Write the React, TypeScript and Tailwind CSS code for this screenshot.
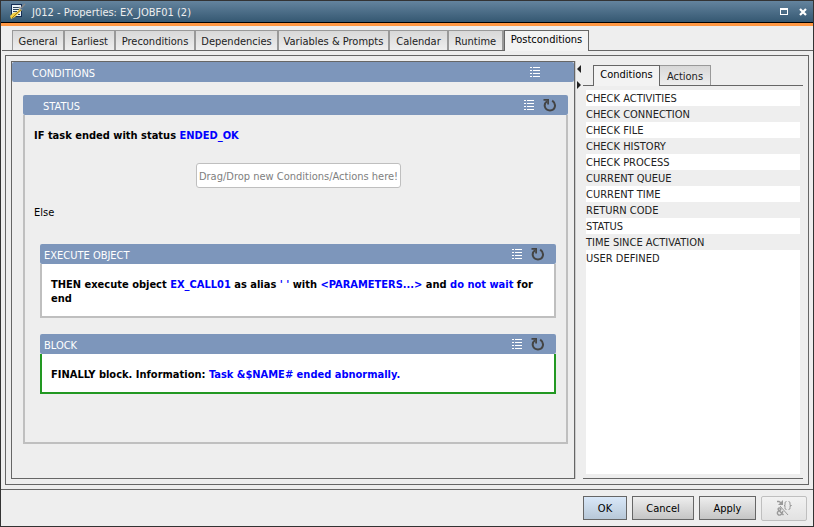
import { useState } from 'react';

const tabs = [
  { name: 'General', width: 'w-[53px]' },
  { name: 'Earliest', width: 'w-[51px]' },
  { name: 'Preconditions', width: 'w-[80px]' },
  { name: 'Dependencies', width: 'w-[83px]' },
  { name: 'Variables & Prompts', width: 'w-[111px]' },
  { name: 'Calendar', width: 'w-[59px]' },
  { name: 'Runtime', width: 'w-[55px]' },
  { name: 'Postconditions', width: 'w-[85px]' },
];

const conditions = [
  'CHECK ACTIVITIES',
  'CHECK CONNECTION',
  'CHECK FILE',
  'CHECK HISTORY',
  'CHECK PROCESS',
  'CURRENT QUEUE',
  'CURRENT TIME',
  'RETURN CODE',
  'STATUS',
  'TIME SINCE ACTIVATION',
  'USER DEFINED',
];

function ListIcon() {
  return (
    <svg width="10" height="10" viewBox="0 0 10 10" fill="#fff" shapeRendering="crispEdges">
      <path d="M0 0h2v1H0zM3 0h7v1H3zM0 3h2v1H0zM3 3h7v1H3zM0 6h2v1H0zM3 6h7v1H3zM0 9h2v1H0zM3 9h7v1H3z" />
    </svg>
  );
}

function ReloadIcon() {
  return (
    <svg width="14" height="14" viewBox="0 0 14 14" fill="none" stroke="#444" strokeWidth="2">
      <path d="M4 3.2C-0.2 6.4 1.8 12.4 7 12.4S14 6 9.2 2.6" />
      <path d="M0.5 1h5.5v5.5H4.2V2.8H0.5z" fill="#444" stroke="none" />
    </svg>
  );
}

function Header({ title, className, reload = true }: { title: string; className: string; reload?: boolean }) {
  return (
    <div className={`flex h-5 items-center rounded-xs bg-[#7d96bb] text-white ${className}`}>
      <h2 className="flex-1 pt-[3px]">{title}</h2>
      <button aria-label={`${title} menu`}><ListIcon /></button>
      {reload && <button aria-label={`Reset ${title}`} className="ml-[9px]"><ReloadIcon /></button>}
    </div>
  );
}

function Value({ children }: { children: string }) {
  return <a href="#" className="text-[#0000ff]">{children}</a>;
}

export default function App() {
  const [active, setActive] = useState('Postconditions');
  const [panel, setPanel] = useState('Conditions');

  return (
    <div className="flex min-h-screen flex-col border border-[#333] bg-[#eee] font-['DejaVu_Sans_Condensed','Noto_Sans',sans-serif] text-[11px] leading-[14px] text-[#222]">
      <header className="flex h-[22px] items-center border-b border-black bg-gradient-to-b from-[#64849e] to-[#355872] pr-[6px] pl-2 text-[#eee]">
        <svg width="17" height="17" viewBox="0 0 17 17">
          <path d="M2 1h11v13H2z" fill="#142d55" />
          <path d="M3 2h9v11H3z" fill="#e9f1f5" />
          <path d="M4 4.5h6M4 6.5h6M4 8.5h4M9 11.5h2" stroke="#30475c" />
          <path d="M16 1l-4 4" stroke="#888" strokeWidth="1.5" />
          <path d="M11 5l2 2-4 4-3 3-4 2-1-3 3-3 4-1z" fill="#f1cf43" />
          <path d="M3 15l5-5 4-3" stroke="#a77b16" fill="none" />
          <path d="M10 4l3 3" stroke="#8e96a0" strokeWidth="1.5" />
        </svg>
        <h1 className="ml-[6px] flex-1 pt-[3px]">J012 - Properties: EX_JOBF01 (2)</h1>
        <button aria-label="Maximize" className="mr-[11px]">
          <svg width="8" height="7" viewBox="0 0 8 7" shapeRendering="crispEdges"><path d="M0 0h8v7H0zM1 2v4h6V2z" fill="#fff" fillRule="evenodd" /></svg>
        </button>
        <button aria-label="Close">
          <svg width="8" height="8" viewBox="0 0 8 8"><path d="M1 1l6 6M7 1L1 7" stroke="#fff" strokeWidth="2.2" /></svg>
        </button>
      </header>
      <div className="h-[3px] bg-[#ff9742]" />

      <nav role="tablist" className="mt-1 ml-px flex h-[21px] border-b border-[#666] pl-[10px]">
        {tabs.map(({ name, width }) => (
          <button
            key={name}
            role="tab"
            aria-selected={active === name}
            onClick={() => setActive(name)}
            className={`${width} shrink-0 whitespace-nowrap border-t ${active === name ? 'h-[21px] border-x border-[#666] bg-[#f3f3f3] pb-[2px] text-black' : 'h-5 border-r-2 border-[#999] bg-gradient-to-b from-[#d8d8d8] to-[#eee] pt-[3px] first:border-l'}`}
          >
            {name}
          </button>
        ))}
      </nav>

      <main className="mx-1 mt-1 mb-1 flex flex-1 border border-[#666] p-[5px]">
        <section className="min-w-0 flex-1 border border-[#666]">
          <Header title="CONDITIONS" reload={false} className="pr-[34px] pl-5" />
          <div className="mt-[13px] mr-[6px] ml-[11px]">
            <Header title="STATUS" className="pr-[11px] pl-5" />
            <div className="border-2 border-t-0 border-[#bfbfbf] pt-[14px] pr-[3px] pb-12 pl-[9px] text-black">
              <p className="font-bold">IF task ended with status <Value>ENDED_OK</Value></p>
              <div className="mx-auto mt-5 flex h-[25px] w-[205px] items-center justify-center rounded-[3px] border border-[#bfbfbf] bg-white pt-[2px] whitespace-nowrap text-[#808080]">
                Drag/Drop new Conditions/Actions here!
              </div>
              <p className="mt-[18px]">Else</p>

              <article className="mt-6 mr-[7px] ml-[6px]">
                <Header title="EXECUTE OBJECT" className="pr-[11px] pl-1" />
                <p className="h-[54px] border-2 border-t-0 border-[#bfbfbf] bg-white px-[9px] pt-[14px] font-bold">
                  THEN execute object <Value>EX_CALL01</Value> as alias <Value>' '</Value> with <Value>{'<PARAMETERS...>'}</Value> and <Value>do not wait</Value> for end
                </p>
              </article>

              <article className="mt-4 mr-[7px] ml-[6px]">
                <Header title="BLOCK" className="pr-[11px] pl-1" />
                <p className="h-10 border-2 border-t-0 border-[#229822] bg-white px-[9px] pt-[14px] font-bold">
                  FINALLY block. Information: <Value>Task &$NAME# ended abnormally.</Value>
                </p>
              </article>
            </div>
          </div>
        </section>

        <div className="flex w-2 flex-col items-start gap-2 border-l border-[#ccc] pt-1 pl-px">
          <svg width="4" height="8" viewBox="0 0 4 8"><path d="M4 0v8L0 4z" fill="#222" /></svg>
          <svg width="4" height="8" viewBox="0 0 4 8"><path d="M0 0v8l4-4z" fill="#222" /></svg>
        </div>

        <aside className="flex w-[220px] shrink-0 flex-col border-b border-[#666] pt-1">
          <div role="tablist" className="flex h-[21px] border-b border-[#666] pl-[10px]">
            {['Conditions', 'Actions'].map((name) => (
              <button
                key={name}
                role="tab"
                aria-selected={panel === name}
                onClick={() => setPanel(name)}
                className={`border-t border-r ${panel === name ? 'h-[21px] w-[67px] border-l border-[#666] bg-[#f3f3f3] pb-[2px] text-black' : 'h-5 w-[51px] border-[#999] bg-gradient-to-b from-[#d8d8d8] to-[#eee] pt-[3px]'}`}
              >
                {name}
              </button>
            ))}
          </div>
          <ul className="mx-[3px] mt-1 mb-1 flex-1 bg-white">
            {conditions.map((item) => (
              <li key={item} className="h-4 pt-[2px] even:bg-[#eee]">{item}</li>
            ))}
          </ul>
        </aside>
      </main>

      <footer className="flex h-[37px] items-center justify-end gap-[5px] border-t border-[#666] pr-[6px] text-black">
        <button className="h-6 w-11 border border-[#666] bg-gradient-to-b from-[#d9e8f9] to-[#b8c8d8] pt-[2px]">OK</button>
        <button className="h-6 w-[62px] border border-[#666] bg-gradient-to-b from-[#eee] to-[#c5c5c5] pt-[2px]">Cancel</button>
        <button className="h-6 w-[57px] border border-[#666] bg-gradient-to-b from-[#eee] to-[#c5c5c5] pt-[2px]">Apply</button>
        <button disabled aria-label="Variables" className="flex h-[25px] w-[46px] items-center justify-center rounded-xs border border-[#bfbfbf] bg-gradient-to-b from-[#f2f2f2] to-[#e2e2e2]">
          <svg width="16" height="16" viewBox="0 0 16 16" fill="none" stroke="#999">
            <path d="M1 1.5h2l3 2" strokeWidth="1.5" />
            <path d="M7 0v5H2z" fill="#999" stroke="none" />
            <path d="M4 6l8 9M10.5 1.5q-2 0-1.5 2.5t-1 1.5q1.5 0 1 2t1.5 2M12.5 1.5q2 0 1.5 2.5t1.5 1.5q-2 0-1.5 2t-1.5 2" />
            <path d="M7.5 15L2.5 10q-1-2 1-2t1 2l-2 1q-2 2-.5 3.5t3.500-.5l1.500-3" strokeWidth="1.4" />
          </svg>
        </button>
      </footer>
    </div>
  );
}
